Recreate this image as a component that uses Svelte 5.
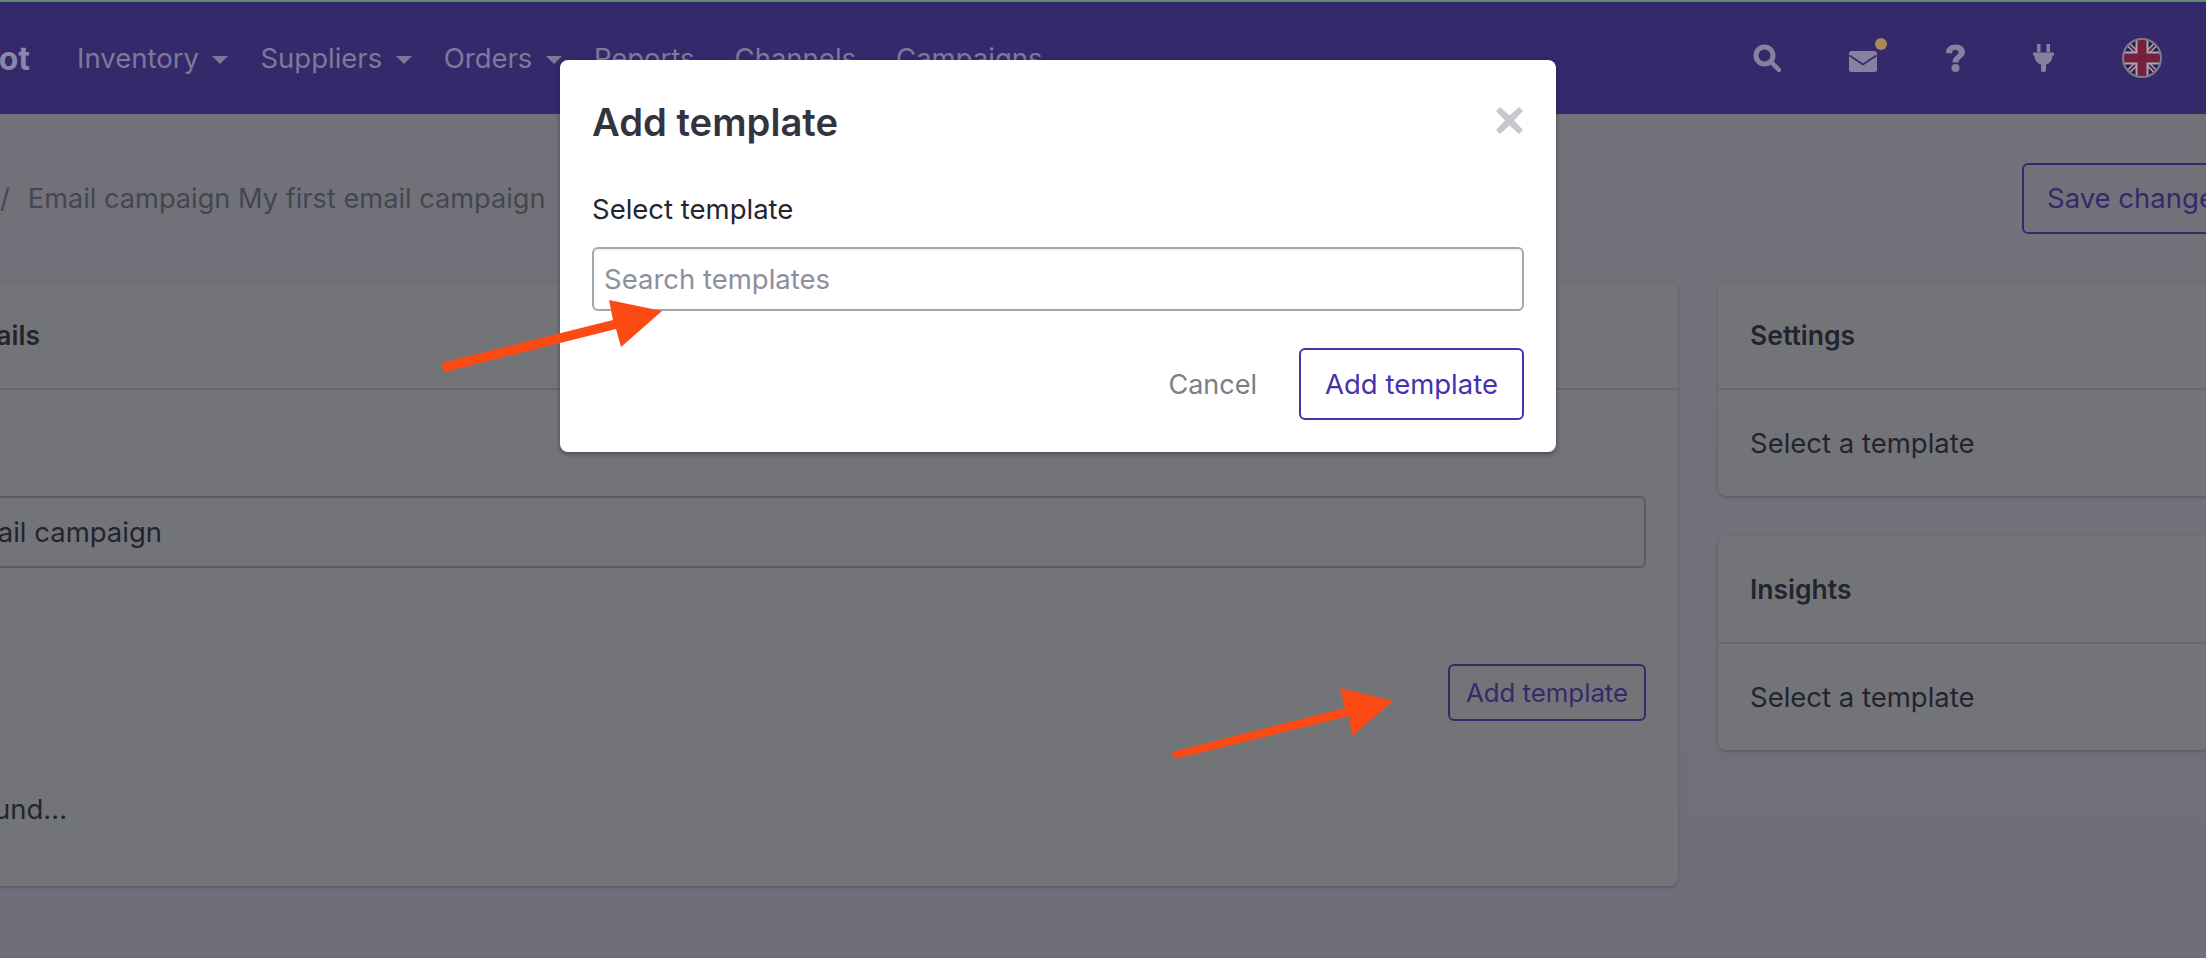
<script>
  const navItems = [
    { label: "Inventory", caret: true },
    { label: "Suppliers", caret: true },
    { label: "Orders", caret: true },
    { label: "Reports", caret: false },
    { label: "Channels", caret: false },
    { label: "Campaigns", caret: false }
  ];
</script>

<div class="page">
  <header class="nav">
    <span class="logo">Robot</span>
    <nav class="nav-links">
      {#each navItems as item}
        <span class="nav-link">
          {item.label}
          {#if item.caret}<i class="caret"></i>{/if}
        </span>
      {/each}
    </nav>
    <div class="nav-icons">
      <svg width="28" height="28" viewBox="0 0 28 28">
        <circle cx="11.5" cy="11.5" r="8.5" fill="none" stroke="currentColor" stroke-width="5" />
        <path d="M18 18l8 8" stroke="currentColor" stroke-width="4.5" stroke-linecap="round" />
      </svg>
      <span class="mail">
        <svg width="28" height="21" viewBox="0 0 28 21">
          <rect width="28" height="21" rx="2.5" fill="currentColor" />
          <path d="M0.500 4.500L14 13.500L27.500 4.500" fill="none" stroke="#35296b" stroke-width="1.600" />
        </svg>
        <i class="dot"></i>
      </span>
      <svg width="20" height="28" viewBox="0 0 20 28">
        <path d="M1 9C1 3.500 5 0.500 10.500 0.500S20 3.500 20 8c0 5.500-6.500 6-6.500 10.500H7.500C7.500 12 13.500 11.500 13.500 8.500c0-1.700-1.300-2.700-3.200-2.700-2.200 0-3.300 1.400-3.300 3.700z" fill="currentColor" />
        <circle cx="10.500" cy="24" r="4" fill="currentColor" />
      </svg>
      <svg width="21" height="28" viewBox="0 0 21 28">
        <path d="M4 0h3.500v8H4zM13.500 0H17v8h-3.500z" fill="currentColor" />
        <path d="M0 8.500h21v3h-1.500c0 5-3 8-6.500 9V26.500a2.500 1.500 0 0 1-5 0v-6c-3.500-1-6.500-4-6.500-9H0z" fill="currentColor" />
      </svg>
      <svg class="flag" width="40" height="40" viewBox="0 0 40 40">
        <defs><clipPath id="flag-clip"><circle cx="20" cy="20" r="19" /></clipPath></defs>
        <g clip-path="url(#flag-clip)">
          <rect width="40" height="40" fill="#1b2152" />
          <path d="M0 0l40 40M40 0L0 40" stroke="#a8a7b1" stroke-width="5" />
          <path d="M0 0l40 40M40 0L0 40" stroke="#76203f" stroke-width="2" />
          <path d="M20 0v40M0 20h40" stroke="#a8a7b1" stroke-width="13" />
          <path d="M20 0v40M0 20h40" stroke="#76203f" stroke-width="9" />
        </g>
        <circle cx="20" cy="20" r="19" fill="none" stroke="#7d7b88" stroke-width="2" />
      </svg>
    </div>
  </header>

  <div class="titlebar">
    <div class="crumbs">
      <span class="sep">/</span>
      <span>Email campaign My first email campaign</span>
    </div>
    <button class="btn save">Save changes</button>
  </div>

  <main class="columns">
    <section class="card main-card">
      <h2 class="card-head wide-head">Email details</h2>
      <div class="card-body">
        <label class="field-label" for="campaign-name">Name</label>
        <div class="fake-input" id="campaign-name">My first email campaign</div>
        <div class="template-row">
          <span class="field-label">Template</span>
          <button class="btn small">Add template</button>
        </div>
        <p class="empty">No emails found...</p>
      </div>
    </section>

    <aside class="side">
      <section class="card">
        <h2 class="card-head">Settings</h2>
        <div class="side-body">Select a template</div>
      </section>
      <section class="card">
        <h2 class="card-head">Insights</h2>
        <div class="side-body">Select a template</div>
      </section>
    </aside>
  </main>

  <div class="modal">
    <div class="modal-head">
      <h1>Add template</h1>
      <svg class="close" width="27" height="27" viewBox="0 0 27 27">
        <path d="M4 0l9.500 8.500L23 0l4 4-9 9.500 9 9.500-4 4-9.500-8.500L4 27l-4-4 9-9.500L0 4z" fill="currentColor" />
      </svg>
    </div>
    <div class="modal-label">Select template</div>
    <input class="search" placeholder="Search templates" />
    <div class="modal-actions">
      <span class="cancel">Cancel</span>
      <button class="btn confirm">Add template</button>
    </div>
  </div>

  <!-- hand drawn arrows that were put on the screenshot -->
  <svg class="arrows" width="2206" height="958" viewBox="0 0 2206 958">
    <polygon points="441.500,363 613,320 609,300 662,311 621,347 616,329 444.600,372" />
    <polygon points="1172,752 1345,708 1340,688 1393,701 1352,736 1349,716 1175,759" />
  </svg>
</div>

<style>
  :global(body) {
    margin: 0;
    overflow: hidden;
    background: #6e6f7a;
  }

  .page {
    position: relative;
    width: 2206px;
    height: 958px;
    overflow: hidden;
    background: linear-gradient(#727379, #6e6f7a);
    border-top: 2px solid #5f8a6c;
    box-sizing: border-box;
    font-family: Inter, "Liberation Sans", sans-serif;
    font-size: 27.5px;
    color: #23242f;
  }

  .nav {
    display: flex;
    align-items: center;
    height: 112px;
    background: #35296b;
    color: #7d7999;
    font-size: 27.5px;
  }

  .logo {
    flex: none;
    width: 110px;
    margin-left: -80px;
    text-align: right;
    font-size: 32px;
    font-weight: 700;
    color: #8b87a8;
  }

  .nav-links {
    display: flex;
    gap: 40px;
    margin-left: 47px;
  }

  .nav-link {
    display: flex;
    align-items: center;
    gap: 13.5px;
  }

  .caret {
    width: 0;
    height: 0;
    margin-top: 4px;
    margin-right: -8px;
    border: 8px solid transparent;
    border-top: 8px solid #7d7999;
    border-bottom: 0;
  }

  .nav-icons {
    display: flex;
    align-items: center;
    gap: 68px;
    margin-left: auto;
    margin-right: 44px;
    color: #85819f;
  }

  .nav-icons svg {
    display: block;
  }

  .mail {
    position: relative;
    top: 3px;
  }

  .dot {
    position: absolute;
    top: -13px;
    right: -10px;
    width: 12px;
    height: 12px;
    border-radius: 50%;
    background: #a88a58;
  }

  .titlebar {
    display: flex;
    align-items: center;
    justify-content: space-between;
    height: 168px;
    margin-right: -100px;
    padding-left: 6px;
  }

  .crumbs {
    display: flex;
    gap: 18px;
    font-size: 27.2px;
    color: #45464f;
  }

  .sep {
    margin-left: -6px;
  }

  .btn {
    box-sizing: border-box;
    border: 2px solid #35296b;
    border-radius: 6px;
    background: transparent;
    color: #35296b;
    font-family: inherit;
    font-size: 27.5px;
  }

  .save {
    width: 284px;
    height: 71px;
    text-align: left;
    padding-left: 23px;
  }

  .columns {
    display: flex;
    gap: 40px;
    align-items: flex-start;
    margin-left: -200px;
    margin-right: -300px;
  }

  .card {
    box-sizing: border-box;
    background: #737478;
    border-radius: 8px;
    box-shadow: 0 1px 3px rgba(40, 40, 55, 0.35);
  }

  .main-card {
    flex: none;
    width: 1878px;
    height: 604px;
  }

  .card-head {
    box-sizing: border-box;
    height: 108px;
    margin: 0;
    padding: 0 32px;
    display: flex;
    align-items: center;
    border-bottom: 2px solid #66676d;
    font-size: 26.5px;
    font-weight: 600;
  }

  .wide-head {
    padding-left: 79px;
  }

  .card-body {
    padding: 32px;
  }

  .field-label {
    display: block;
    height: 74px;
  }

  .fake-input {
    box-sizing: border-box;
    height: 72px;
    padding: 0 17px;
    display: flex;
    align-items: center;
    border: 2px solid #5a5b67;
    border-radius: 6px;
  }

  .template-row {
    display: flex;
    justify-content: space-between;
    margin-top: 96px;
  }

  .small {
    width: 198px;
    height: 57px;
    font-size: 25.8px;
  }

  .empty {
    margin: 54px 0 0;
  }

  .side {
    flex: 1;
    display: flex;
    flex-direction: column;
    gap: 40px;
  }

  .side .card {
    height: 214px;
  }

  .side-body {
    padding: 0 32px;
    height: 105px;
    display: flex;
    align-items: center;
  }

  .modal {
    position: absolute;
    left: 560px;
    top: 58px;
    box-sizing: border-box;
    width: 996px;
    height: 392px;
    padding: 0 32px;
    background: #fff;
    border-radius: 8px;
    box-shadow: 0 2px 4px rgba(30, 30, 45, 0.5);
  }

  .modal-head {
    display: flex;
    align-items: center;
    justify-content: space-between;
    height: 124px;
  }

  .modal-head h1 {
    margin: 0;
    font-size: 38.200px;
    font-weight: 600;
    color: #33343f;
  }

  .close {
    margin-right: 1px;
    margin-top: -4px;
    color: #c6c7d0;
  }

  .modal-label {
    box-sizing: border-box;
    height: 63px;
    padding-top: 8px;
    color: #24252f;
  }

  .search {
    display: block;
    box-sizing: border-box;
    width: 100%;
    height: 64px;
    padding: 0 10px;
    border: 2px solid #a6a7ad;
    border-radius: 6px;
    background: #fff;
    box-shadow: inset 0 2px 2px rgba(0, 0, 0, 0.05);
    font-family: inherit;
    font-size: 27.5px;
    outline: none;
  }

  .search::placeholder {
    color: #8d8f9d;
  }

  .modal-actions {
    display: flex;
    align-items: center;
    justify-content: flex-end;
    gap: 42px;
    margin-top: 37px;
  }

  .cancel {
    font-size: 27px;
    color: #7b7c8a;
  }

  .confirm {
    width: 225px;
    height: 72px;
    border-color: #4632ad;
    color: #4632ad;
  }

  .arrows {
    position: absolute;
    left: 0;
    top: -2px;
    fill: #fd4a14;
    pointer-events: none;
  }
</style>
